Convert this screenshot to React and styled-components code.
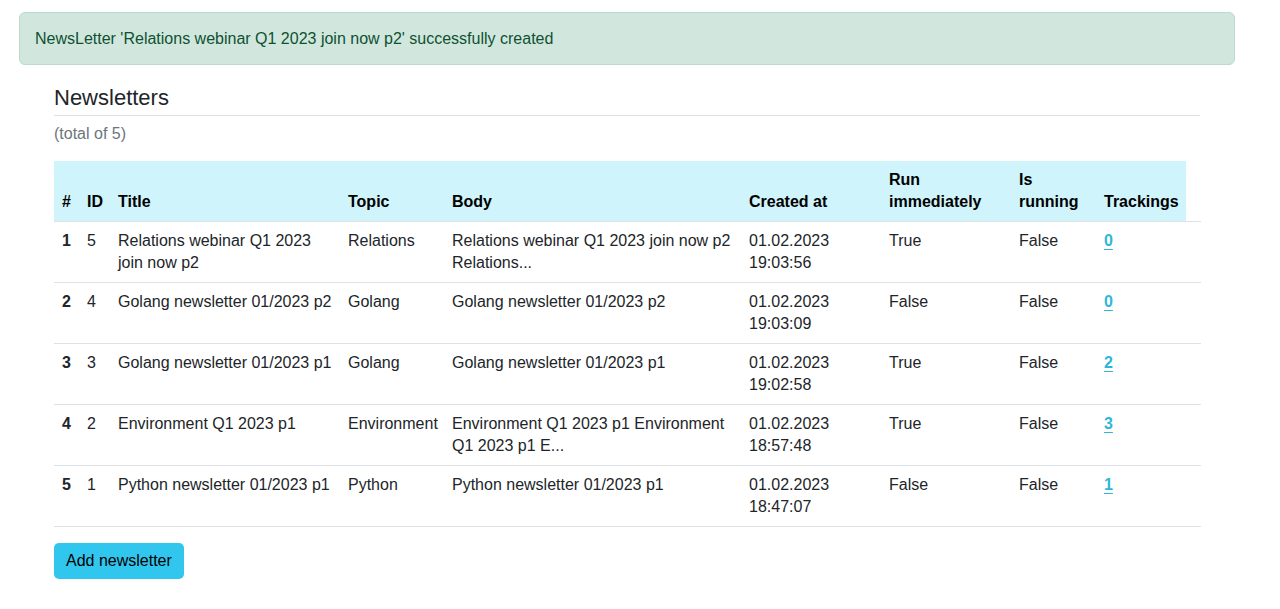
import React from "react";
import styled, { createGlobalStyle } from "styled-components";

const rows = [
  {
    id: 5,
    title: "Relations webinar Q1 2023 join now p2",
    topic: "Relations",
    body: "Relations webinar Q1 2023 join now p2 Relations...",
    date: "01.02.2023",
    time: "19:03:56",
    run: "True",
    running: "False",
    trackings: 0,
  },
  {
    id: 4,
    title: "Golang newsletter 01/2023 p2",
    topic: "Golang",
    body: "Golang newsletter 01/2023 p2",
    date: "01.02.2023",
    time: "19:03:09",
    run: "False",
    running: "False",
    trackings: 0,
  },
  {
    id: 3,
    title: "Golang newsletter 01/2023 p1",
    topic: "Golang",
    body: "Golang newsletter 01/2023 p1",
    date: "01.02.2023",
    time: "19:02:58",
    run: "True",
    running: "False",
    trackings: 2,
  },
  {
    id: 2,
    title: "Environment Q1 2023 p1",
    topic: "Environment",
    body: "Environment Q1 2023 p1 Environment Q1 2023 p1 E...",
    date: "01.02.2023",
    time: "18:57:48",
    run: "True",
    running: "False",
    trackings: 3,
  },
  {
    id: 1,
    title: "Python newsletter 01/2023 p1",
    topic: "Python",
    body: "Python newsletter 01/2023 p1",
    date: "01.02.2023",
    time: "18:47:07",
    run: "False",
    running: "False",
    trackings: 1,
  },
];

const GlobalStyle = createGlobalStyle`
  body {
    margin: 0;
    background: #fff;
    font-family: "Liberation Sans", Arial, sans-serif;
    color: #212529;
  }
`;

const Page = styled.div`
  width: 1216px;
  padding: 12px 0 16px 19px;
`;

const Alert = styled.div`
  box-sizing: border-box;
  height: 53px;
  display: flex;
  align-items: center;
  padding: 0 15px;
  background: #d1e7dd;
  border: 1px solid #badbcc;
  border-radius: 6px;
  color: #0f5132;
  font-size: 16px;
`;

const Container = styled.div`
  margin: 0 35px;
`;

const Heading = styled.h2`
  margin: 20px 0 0;
  padding-bottom: 4px;
  border-bottom: 1px solid #dee2e6;
  font-size: 22px;
  font-weight: 400;
  line-height: 26px;
  color: #212529;
`;

const Total = styled.div`
  margin-top: 7px;
  font-size: 16px;
  line-height: 22px;
  color: #6c757d;
`;

const Table = styled.table`
  width: 100%;
  margin-top: 16px;
  border-collapse: collapse;
  table-layout: fixed;
  font-size: 16px;
  line-height: 22px;
`;

const Th = styled.th`
  width: ${(p) => p.$w}px;
  padding: 8px 7px 8px 8px;
  text-align: left;
  vertical-align: bottom;
  font-weight: 700;
  color: #000;
  background: ${(p) => (p.$blank ? "transparent" : "#cff4fc")};
  border-bottom: 1px solid #dee2e6;
  box-sizing: border-box;
`;

const Td = styled.td`
  padding: 8px 7px 8px 8px;
  vertical-align: top;
  font-weight: ${(p) => (p.$bold ? 700 : 400)};
  border-bottom: 1px solid #dee2e6;
`;

const Link = styled.a`
  color: #2fb6d8;
  font-weight: 700;
  text-decoration: underline;
  text-underline-offset: 3px;
`;

const Button = styled.button`
  margin-top: 16px;
  height: 36px;
  padding: 0 12px;
  border: 0;
  border-radius: 5px;
  background: #31c6ee;
  color: #000;
  font-family: inherit;
  font-size: 16px;
`;

const cols = [
  ["#", 25],
  ["ID", 31],
  ["Title", 230],
  ["Topic", 104],
  ["Body", 297],
  ["Created at", 140],
  ["Run immediately", 130],
  ["Is running", 85],
  ["Trackings", 90],
];

export default function App() {
  return (
    <>
      <GlobalStyle />
      <Page>
        <Alert>
          NewsLetter 'Relations webinar Q1 2023 join now p2' successfully created
        </Alert>
        <Container>
          <Heading>Newsletters</Heading>
          <Total>(total of 5)</Total>
          <Table>
            <thead>
              <tr>
                {cols.map(([label, w]) => (
                  <Th key={label} $w={w}>
                    {label}
                  </Th>
                ))}
                <Th $blank $w={13} />
              </tr>
            </thead>
            <tbody>
              {rows.map((r, i) => (
                <tr key={r.id}>
                  <Td $bold>{i + 1}</Td>
                  <Td>{r.id}</Td>
                  <Td>{r.title}</Td>
                  <Td>{r.topic}</Td>
                  <Td>{r.body}</Td>
                  <Td>
                    {r.date}
                    <br />
                    {r.time}
                  </Td>
                  <Td>{r.run}</Td>
                  <Td>{r.running}</Td>
                  <Td>
                    <Link href="#">{r.trackings}</Link>
                  </Td>
                  <Td />
                </tr>
              ))}
            </tbody>
          </Table>
          <Button>Add newsletter</Button>
        </Container>
      </Page>
    </>
  );
}
